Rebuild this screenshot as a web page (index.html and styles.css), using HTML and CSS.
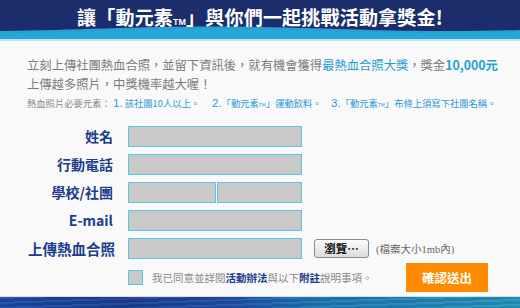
FILE: index.html
```html
<!DOCTYPE html>
<html lang="zh-Hant">
<head>
    <meta charset="UTF-8">
    <meta name="viewport" content="width=device-width, initial-scale=1.0">
    <title>動元素 社團熱血合照</title>
    <link rel="stylesheet" href="styles.css">
</head>
<body>
    <div class="page">
        <div class="header">
            <svg class="wave" width="520" height="41" viewBox="0 0 520 41" preserveAspectRatio="none">
                <rect width="520" height="41" fill="#1b2e6b"/>
                <path d="M0,31 C90,30 160,25 260,27 C360,29 420,33 520,30 L520,41 L0,41 Z" fill="#2a9fd0"/>
                <path d="M0,33 C90,32 160,28 260,29.5 C360,31 420,35 520,32 L520,41 L0,41 Z" fill="#24a8d8"/>
                <rect y="39" width="520" height="2" fill="#bfe4f0"/>
            </svg>
            <h1>讓「動元素<span class="tm">TM</span>」與你們一起挑戰活動拿獎金!</h1>
        </div>

        <div class="content">
            <p class="intro">
                立刻上傳社團熱血合照，並留下資訊後，就有機會獲得<span class="hl">最熱血合照大獎</span>，獎金<span class="hl num">10,000元</span><br>
                上傳越多照片，中獎機率越大喔！
            </p>
            <p class="rules">
                <span class="rules-title">熱血照片必要元素：</span><span class="rule r1"><b>1.</b> 該社團10人以上。</span><span class="rule r2"><b>2.</b>「動元素<small>TM</small>」運動飲料。</span><span class="rule"><b>3.</b>「動元素<small>TM</small>」布條上須寫下社團名稱。</span>
            </p>

            <form class="form" onsubmit="return false">
                <label class="label">姓名</label>
                <input type="text" class="field">

                <label class="label">行動電話</label>
                <input type="text" class="field">

                <label class="label">學校/社團</label>
                <div class="split">
                    <input type="text" class="field">
                    <input type="text" class="field">
                </div>

                <label class="label">E-mail</label>
                <input type="text" class="field">

                <label class="label upload-label">上傳熱血合照</label>
                <div class="upload">
                    <input type="text" class="field">
                    <button type="button" class="browse">瀏覽…</button>
                    <span class="size-note">(檔案大小1mb內)</span>
                </div>

                <div class="agree">
                    <span class="check"></span>
                    <span class="agree-text">我已同意並詳閱<b>活動辦法</b>與以下<b>附註</b>說明事項。</span>
                    <button type="submit" class="submit">確認送出</button>
                </div>
            </form>
        </div>

        <div class="footer"></div>
    </div>
</body>
</html>
```

FILE: styles.css
```css
html, body {
    margin: 0;
    padding: 0;
    height: 308px;
    overflow: hidden;
}
body {
    font-family: "Noto Sans CJK TC", "Liberation Sans", sans-serif;
    background: #f9f9f9;
    color: #808080;
}
.page {
    width: 520px;
}
.header {
    position: relative;
    height: 41px;
}
.wave {
    position: absolute;
    left: 0;
    top: 0;
    display: block;
}
.header h1 {
    position: relative;
    margin: 0;
    text-align: center;
    color: #fff;
    font-size: 19px;
    font-weight: bold;
    line-height: 34px;
    letter-spacing: 0.2px;
}
.header .tm {
    font-family: "Liberation Sans", sans-serif;
    font-size: 9px;
    letter-spacing: 0;
}
.content {
    padding: 15px 32px 0 27px;
}
.intro {
    margin: 0;
    font-size: 12.3px;
    line-height: 19px;
    white-space: nowrap;
    color: #7c7c7c;
}
.hl {
    color: #1f9fd4;
}
.num {
    font-weight: bold;
}
.rules {
    margin: 2px 0 0;
    font-size: 9.3px;
    line-height: 14px;
    white-space: nowrap;
    color: #888;
}
.rules-title {
    display: inline-block;
    width: 86px;
}
.rule {
    display: inline-block;
    color: #2a9ad6;
}
.rule b {
    font-family: "Liberation Sans", sans-serif;
    font-size: 11.5px;
    font-weight: normal;
}
.rule small {
    font-size: 5px;
}
.r1 {
    width: 99px;
}
.r2 {
    width: 119px;
}
.form {
    display: grid;
    grid-template-columns: 86px 1fr;
    column-gap: 15px;
    row-gap: 7px;
    margin-top: 14px;
}
.label {
    text-align: right;
    color: #1c3c8c;
    font-size: 14px;
    font-weight: bold;
    line-height: 21px;
}
.upload-label {
    font-size: 14.5px;
    margin-right: -2px;
    white-space: nowrap;
}
.field {
    box-sizing: border-box;
    width: 174px;
    height: 21px;
    margin: 0;
    padding: 0 4px;
    border: 1px solid #5cc6de;
    background: #c9c9c9;
    outline: none;
}
.split {
    display: flex;
    gap: 1px;
}
.split .field:first-child {
    width: 88px;
}
.split .field:last-child {
    width: 85px;
}
.upload {
    display: flex;
    align-items: center;
}
.browse {
    box-sizing: border-box;
    width: 55px;
    height: 19px;
    margin-left: 12px;
    padding: 0;
    border: 1px solid #7d8ba3;
    border-radius: 3px;
    background: linear-gradient(#fbfbfb, #dcdcdc);
    color: #111;
    font-family: "Noto Sans CJK TC", sans-serif;
    font-size: 11.5px;
    font-weight: bold;
    line-height: 17px;
}
.size-note {
    margin-left: 7px;
    font-family: "Liberation Serif", "Noto Sans CJK TC", serif;
    font-size: 10.5px;
    color: #666;
}
.agree {
    grid-column: 2;
    display: flex;
    align-items: center;
    margin-top: -3px;
}
.check {
    box-sizing: border-box;
    width: 15px;
    height: 15px;
    border: 1px solid #5cc6de;
    background: #c9c9c9;
}
.agree-text {
    margin-left: 9px;
    font-size: 10.5px;
    color: #8a8a8a;
}
.agree-text b {
    color: #1c3c8c;
}
.submit {
    width: 82px;
    height: 29px;
    margin-left: auto;
    border: none;
    background: #ff8b00;
    color: #fff;
    font-family: "Noto Sans CJK TC", sans-serif;
    font-size: 12.5px;
    font-weight: bold;
    cursor: pointer;
}
.footer {
    height: 20px;
    margin-top: 4px;
    border-top: 1px solid #d8dde4;
    background:
        repeating-linear-gradient(178deg, rgba(255, 255, 255, 0.06) 0 2px, rgba(0, 0, 0, 0.08) 2px 5px),
        linear-gradient(90deg, #1c4aa6 0%, #1a3f92 25%, #1f4fa8 45%, #1d78b4 62%, #2494bc 100%);
}
```
